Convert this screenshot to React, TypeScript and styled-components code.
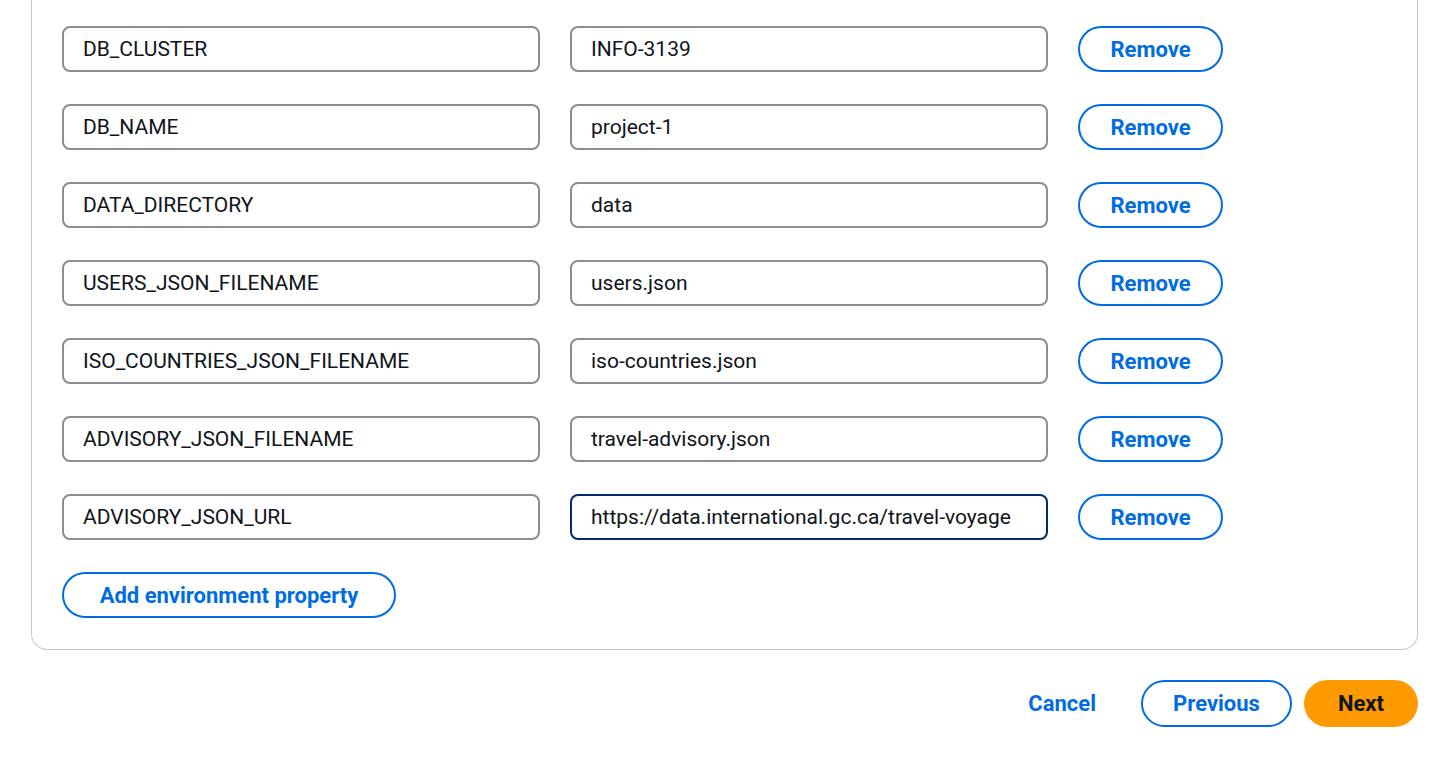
import React from "react";
import styled, { createGlobalStyle } from "styled-components";

const Global = createGlobalStyle`
  html, body { margin: 0; padding: 0; background: #ffffff; }
  body { font-family: Roboto, "Liberation Sans", sans-serif; color: #0f141a; }
  * { box-sizing: border-box; }
`;

const Page = styled.div`
  width: 1434px;
  height: 763px;
  overflow: hidden;
  padding: 0 16px 0 31px;
`;

const Card = styled.div`
  border: 1px solid #c6c6cd;
  border-top: none;
  border-radius: 0 0 16px 16px;
  padding: 26px 30px 31px 30px;
  display: flex;
  flex-direction: column;
  gap: 32px;
`;

const Row = styled.div`
  display: flex;
  align-items: center;
  gap: 30px;
`;

const Field = styled.div<{ $focused?: boolean }>`
  width: 478px;
  height: 46px;
  border: 2px solid ${(p) => (p.$focused ? "#002b66" : "#8c8c94")};
  border-radius: 8px;
  padding: 0 19px;
  display: flex;
  align-items: center;
  font-size: 21px;
  white-space: nowrap;
  overflow: hidden;
  color: #0f141a;
`;

const OutlineButton = styled.button<{ $w?: number; $h?: number }>`
  height: ${(p) => p.$h ?? 46}px;
  width: ${(p) => (p.$w ? `${p.$w}px` : "auto")};
  padding: 0 16px;
  border: 2px solid #006ce0;
  border-radius: 24px;
  background: #ffffff;
  color: #006ce0;
  font-family: inherit;
  font-weight: 700;
  font-size: 22px;
  white-space: nowrap;
  display: inline-flex;
  align-items: center;
  justify-content: center;
  cursor: pointer;
`;

const AddRow = styled.div`
  display: flex;
`;

const Footer = styled.div`
  display: flex;
  justify-content: flex-end;
  align-items: center;
  padding-top: 30px;
  gap: 12px;
`;

const LinkButton = styled.button`
  border: none;
  background: none;
  color: #006ce0;
  font-family: inherit;
  font-weight: 700;
  font-size: 22px;
  padding: 0;
  margin-right: 33px;
  cursor: pointer;
`;

const PrimaryButton = styled.button`
  height: 47px;
  width: 114px;
  border: none;
  border-radius: 24px;
  background: #ff9900;
  color: #0f141a;
  font-family: inherit;
  font-weight: 700;
  font-size: 22px;
  cursor: pointer;
`;

const rows: [string, string, boolean?][] = [
  ["DB_CLUSTER", "INFO-3139"],
  ["DB_NAME", "project-1"],
  ["DATA_DIRECTORY", "data"],
  ["USERS_JSON_FILENAME", "users.json"],
  ["ISO_COUNTRIES_JSON_FILENAME", "iso-countries.json"],
  ["ADVISORY_JSON_FILENAME", "travel-advisory.json"],
  ["ADVISORY_JSON_URL", "https://data.international.gc.ca/travel-voyage", true],
];

export default function App() {
  return (
    <Page>
      <Global />
      <Card>
        {rows.map(([k, v, f]) => (
          <Row key={k}>
            <Field>{k}</Field>
            <Field $focused={f}>{v}</Field>
            <OutlineButton $w={145}>Remove</OutlineButton>
          </Row>
        ))}
        <AddRow>
          <OutlineButton $w={334}>Add environment property</OutlineButton>
        </AddRow>
      </Card>
      <Footer>
        <LinkButton>Cancel</LinkButton>
        <OutlineButton $w={151} $h={47}>Previous</OutlineButton>
        <PrimaryButton>Next</PrimaryButton>
      </Footer>
    </Page>
  );
}
